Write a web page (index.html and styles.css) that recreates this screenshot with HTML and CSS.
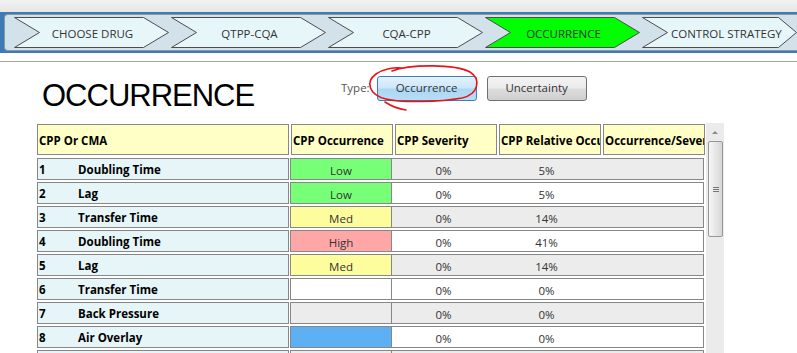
FILE: index.html
```html
<!DOCTYPE html>
<html lang="en">
<head>
    <meta charset="UTF-8">
    <meta name="viewport" content="width=device-width, initial-scale=1.0">
    <title>Occurrence</title>
    <link rel="stylesheet" href="styles.css">
</head>
<body>
    <div class="window-top"></div>

    <div class="wizard">
        <div class="wizard-inner">
            <div class="step">
                <svg class="step-shape" viewBox="0 0 155 31"><polygon points="0.5,0.5 129.5,0.5 154.5,15.5 129.5,30.5 0.5,30.5 25.5,15.5"/></svg>
                <span>CHOOSE DRUG</span>
            </div>
            <div class="step">
                <svg class="step-shape" viewBox="0 0 155 31"><polygon points="0.5,0.5 129.5,0.5 154.5,15.5 129.5,30.5 0.5,30.5 25.5,15.5"/></svg>
                <span>QTPP-CQA</span>
            </div>
            <div class="step">
                <svg class="step-shape" viewBox="0 0 155 31"><polygon points="0.5,0.5 129.5,0.5 154.5,15.5 129.5,30.5 0.5,30.5 25.5,15.5"/></svg>
                <span>CQA-CPP</span>
            </div>
            <div class="step current">
                <svg class="step-shape" viewBox="0 0 155 31"><polygon points="0.5,0.5 129.5,0.5 154.5,15.5 129.5,30.5 0.5,30.5 25.5,15.5"/></svg>
                <span>OCCURRENCE</span>
            </div>
            <div class="step last">
                <svg class="step-shape" viewBox="0 0 155 31"><polygon points="0.5,0.5 136.5,0.5 154.5,15.5 136.5,30.5 0.5,30.5 25.5,15.5"/></svg>
                <span>CONTROL STRATEGY</span>
            </div>
        </div>
    </div>

    <div class="divider"></div>

    <div class="content">
        <div class="head">
            <h1>OCCURRENCE</h1>
            <div class="type-group">
                <span class="type-label">Type:</span>
                <button class="type-btn active">Occurrence</button>
                <button class="type-btn">Uncertainty</button>
                <!-- red pen mark drawn over the screenshot -->
                <svg class="scribble" viewBox="360 62 125 52">
                    <path d="M392 71 C410 64 455 64 470 72 C481 79 479 94 462 98 C440 102 402 103 386 99 C369 95 365 82 376 74 C383 69 394 67 402 68 M385 102 C391 106 398 109 406 110"/>
                </svg>
            </div>
        </div>

        <div class="grid-wrap">
            <div class="grid">
                <div class="grid-head">
                    <div class="hc first">CPP Or CMA</div>
                    <div class="hc">CPP Occurrence</div>
                    <div class="hc">CPP Severity</div>
                    <div class="hc">CPP Relative Occurrence</div>
                    <div class="hc">Occurrence/Severity</div>
                </div>

                <div class="row">
                    <div class="name-cell"><span class="num">1</span><span class="nm">Doubling Time</span></div>
                    <div class="vals shade"><div class="occ low">Low</div><div class="val">0%</div><div class="val">5%</div><div class="val rest"></div></div>
                </div>
                <div class="row">
                    <div class="name-cell"><span class="num">2</span><span class="nm">Lag</span></div>
                    <div class="vals"><div class="occ low">Low</div><div class="val">0%</div><div class="val">5%</div><div class="val rest"></div></div>
                </div>
                <div class="row">
                    <div class="name-cell"><span class="num">3</span><span class="nm">Transfer Time</span></div>
                    <div class="vals shade"><div class="occ med">Med</div><div class="val">0%</div><div class="val">14%</div><div class="val rest"></div></div>
                </div>
                <div class="row">
                    <div class="name-cell"><span class="num">4</span><span class="nm">Doubling Time</span></div>
                    <div class="vals"><div class="occ high">High</div><div class="val">0%</div><div class="val">41%</div><div class="val rest"></div></div>
                </div>
                <div class="row">
                    <div class="name-cell"><span class="num">5</span><span class="nm">Lag</span></div>
                    <div class="vals shade"><div class="occ med">Med</div><div class="val">0%</div><div class="val">14%</div><div class="val rest"></div></div>
                </div>
                <div class="row">
                    <div class="name-cell"><span class="num">6</span><span class="nm">Transfer Time</span></div>
                    <div class="vals"><div class="occ"></div><div class="val">0%</div><div class="val">0%</div><div class="val rest"></div></div>
                </div>
                <div class="row">
                    <div class="name-cell"><span class="num">7</span><span class="nm">Back Pressure</span></div>
                    <div class="vals shade"><div class="occ"></div><div class="val">0%</div><div class="val">0%</div><div class="val rest"></div></div>
                </div>
                <div class="row">
                    <div class="name-cell"><span class="num">8</span><span class="nm">Air Overlay</span></div>
                    <div class="vals"><div class="occ none"></div><div class="val">0%</div><div class="val">0%</div><div class="val rest"></div></div>
                </div>
                <div class="row">
                    <div class="name-cell"></div>
                    <div class="vals shade"><div class="occ"></div><div class="val rest"></div></div>
                </div>
            </div>

            <div class="scrollbar">
                <div class="sb-arrow"></div>
                <div class="sb-thumb"><span class="grip"></span></div>
            </div>
        </div>
    </div>
</body>
</html>
```

FILE: styles.css
```css
* {
    margin: 0;
    padding: 0;
    box-sizing: border-box;
}

body {
    font-family: 'Open Sans', 'Noto Sans', sans-serif;
    font-size: 11.5px;
    color: #333;
    background: #fff;
    overflow: hidden;
}

.window-top {
    height: 12px;
    background: linear-gradient(#f2f2f2, #e6e6e6);
}

/* wizard strip */
.wizard {
    background: #3e7bb6;
    padding: 2px 0 2px 4px;
}

.wizard-inner {
    display: flex;
    gap: 2px;
    height: 37px;
    padding: 2px 0 0 9px;
    background: #d2e1ea;
    border: 1px solid #8a98a2;
    border-right: none;
    border-radius: 4px 0 0 4px;
    overflow: hidden;
}

.step {
    position: relative;
    flex: 0 0 155px;
    height: 31px;
    display: flex;
    align-items: center;
    justify-content: center;
    padding: 2px 0 0 2px;
    color: #333;
    white-space: nowrap;
}

.step.last {
    justify-content: flex-start;
    padding-left: 29px;
}

.step-shape {
    position: absolute;
    left: 0;
    top: 0;
    width: 155px;
    height: 31px;
}

.step-shape polygon {
    fill: #e7f7f9;
    stroke: #4d4d4d;
    stroke-width: 1;
}

.step.current .step-shape polygon {
    fill: #00ff00;
}

.step span {
    position: relative;
}

.divider {
    height: 1px;
    margin-top: 8px;
    background: #a3a3a3;
}

/* page */
.content {
    padding-left: 37px;
}

.head {
    display: flex;
    height: 62px;
}

.head h1 {
    flex: 0 0 299px;
    margin: 18px 0 0 5px;
    font-family: 'Liberation Sans', Arial, sans-serif;
    font-size: 31px;
    line-height: 31px;
    font-weight: normal;
    letter-spacing: -1px;
    color: #000;
}

.type-group {
    position: relative;
    display: flex;
    align-items: center;
    height: 25px;
    margin-top: 14px;
}

.type-label {
    color: #555;
    margin: 0 7px 3px 0;
}

.type-btn {
    width: 100px;
    height: 25px;
    margin-right: 10px;
    padding-bottom: 2px;
    font-family: inherit;
    font-size: 11.5px;
    color: #333;
    border: 1px solid #707070;
    border-radius: 3px;
    background: linear-gradient(#f3f3f3 0%, #ebebeb 48%, #dddddd 52%, #cfcfcf 100%);
}

.type-btn.active {
    border-color: #3c7fb1;
    background: linear-gradient(#e3f2fc 0%, #cce7f8 48%, #abd7f3 52%, #b6ddf5 100%);
}

.scribble {
    position: absolute;
    left: 19px;
    top: -14px;
    width: 125px;
    height: 52px;
    overflow: visible;
}

.scribble path {
    fill: none;
    stroke: #e8141c;
    stroke-width: 1.6;
    stroke-linecap: round;
}

/* grid */
.grid-wrap {
    display: flex;
    align-items: flex-start;
}

.grid {
    width: 668px;
}

.grid-head {
    display: flex;
    gap: 2px;
    height: 31px;
    margin-bottom: 3px;
}

.hc {
    flex: 0 0 102px;
    display: flex;
    align-items: center;
    padding: 2px 0 0 1px;
    background: #ffffc6;
    border: 1px solid #878787;
    font-weight: bold;
    color: #000;
    white-space: nowrap;
    overflow: hidden;
}

.hc.first {
    flex-basis: 252px;
}

.row {
    display: flex;
    gap: 1px;
    height: 22px;
    margin-bottom: 2px;
}

.name-cell {
    flex: 0 0 252px;
    display: flex;
    align-items: center;
    background: #e6f6f8;
    border: 1px solid #878787;
    font-weight: bold;
    color: #000;
    white-space: nowrap;
}

.num {
    width: 40px;
    padding-left: 1px;
}

.vals {
    flex: 0 0 414px;
    display: flex;
    background: #fff;
    border: 1px solid #878787;
}

.vals.shade {
    background: #ececec;
}

.occ,
.val {
    display: flex;
    align-items: center;
    justify-content: center;
    padding-top: 2px;
}

.occ {
    flex: 0 0 101px;
    border-right: 1px solid #878787;
}

.occ.low {
    background: #77ff77;
}

.occ.med {
    background: #fdfd9d;
}

.occ.high {
    background: #ffa6a6;
}

.occ.none {
    background: #5eb0f5;
}

.val {
    flex: 0 0 103px;
}

.val.rest {
    flex: 1;
}

/* scrollbar */
.scrollbar {
    width: 18px;
    height: 240px;
    margin: -1px 0 0 1px;
    background: #ebebeb;
}

.sb-arrow {
    height: 18px;
    display: flex;
    align-items: center;
    justify-content: center;
}

.sb-arrow::before {
    content: '';
    border-left: 3px solid transparent;
    border-right: 3px solid transparent;
    border-bottom: 3px solid #8a8a8a;
}

.sb-thumb {
    display: flex;
    align-items: center;
    justify-content: center;
    width: 15px;
    height: 96px;
    margin-left: 2px;
    border: 1px solid #979797;
    border-radius: 2px;
    background: linear-gradient(to right, #f6f6f6, #e4e4e4 60%, #d6d6d6);
}

.grip {
    width: 6px;
    height: 5px;
    border-top: 1px solid #777;
    border-bottom: 1px solid #777;
    background: linear-gradient(#777, #777) center / 100% 1px no-repeat;
}
```
